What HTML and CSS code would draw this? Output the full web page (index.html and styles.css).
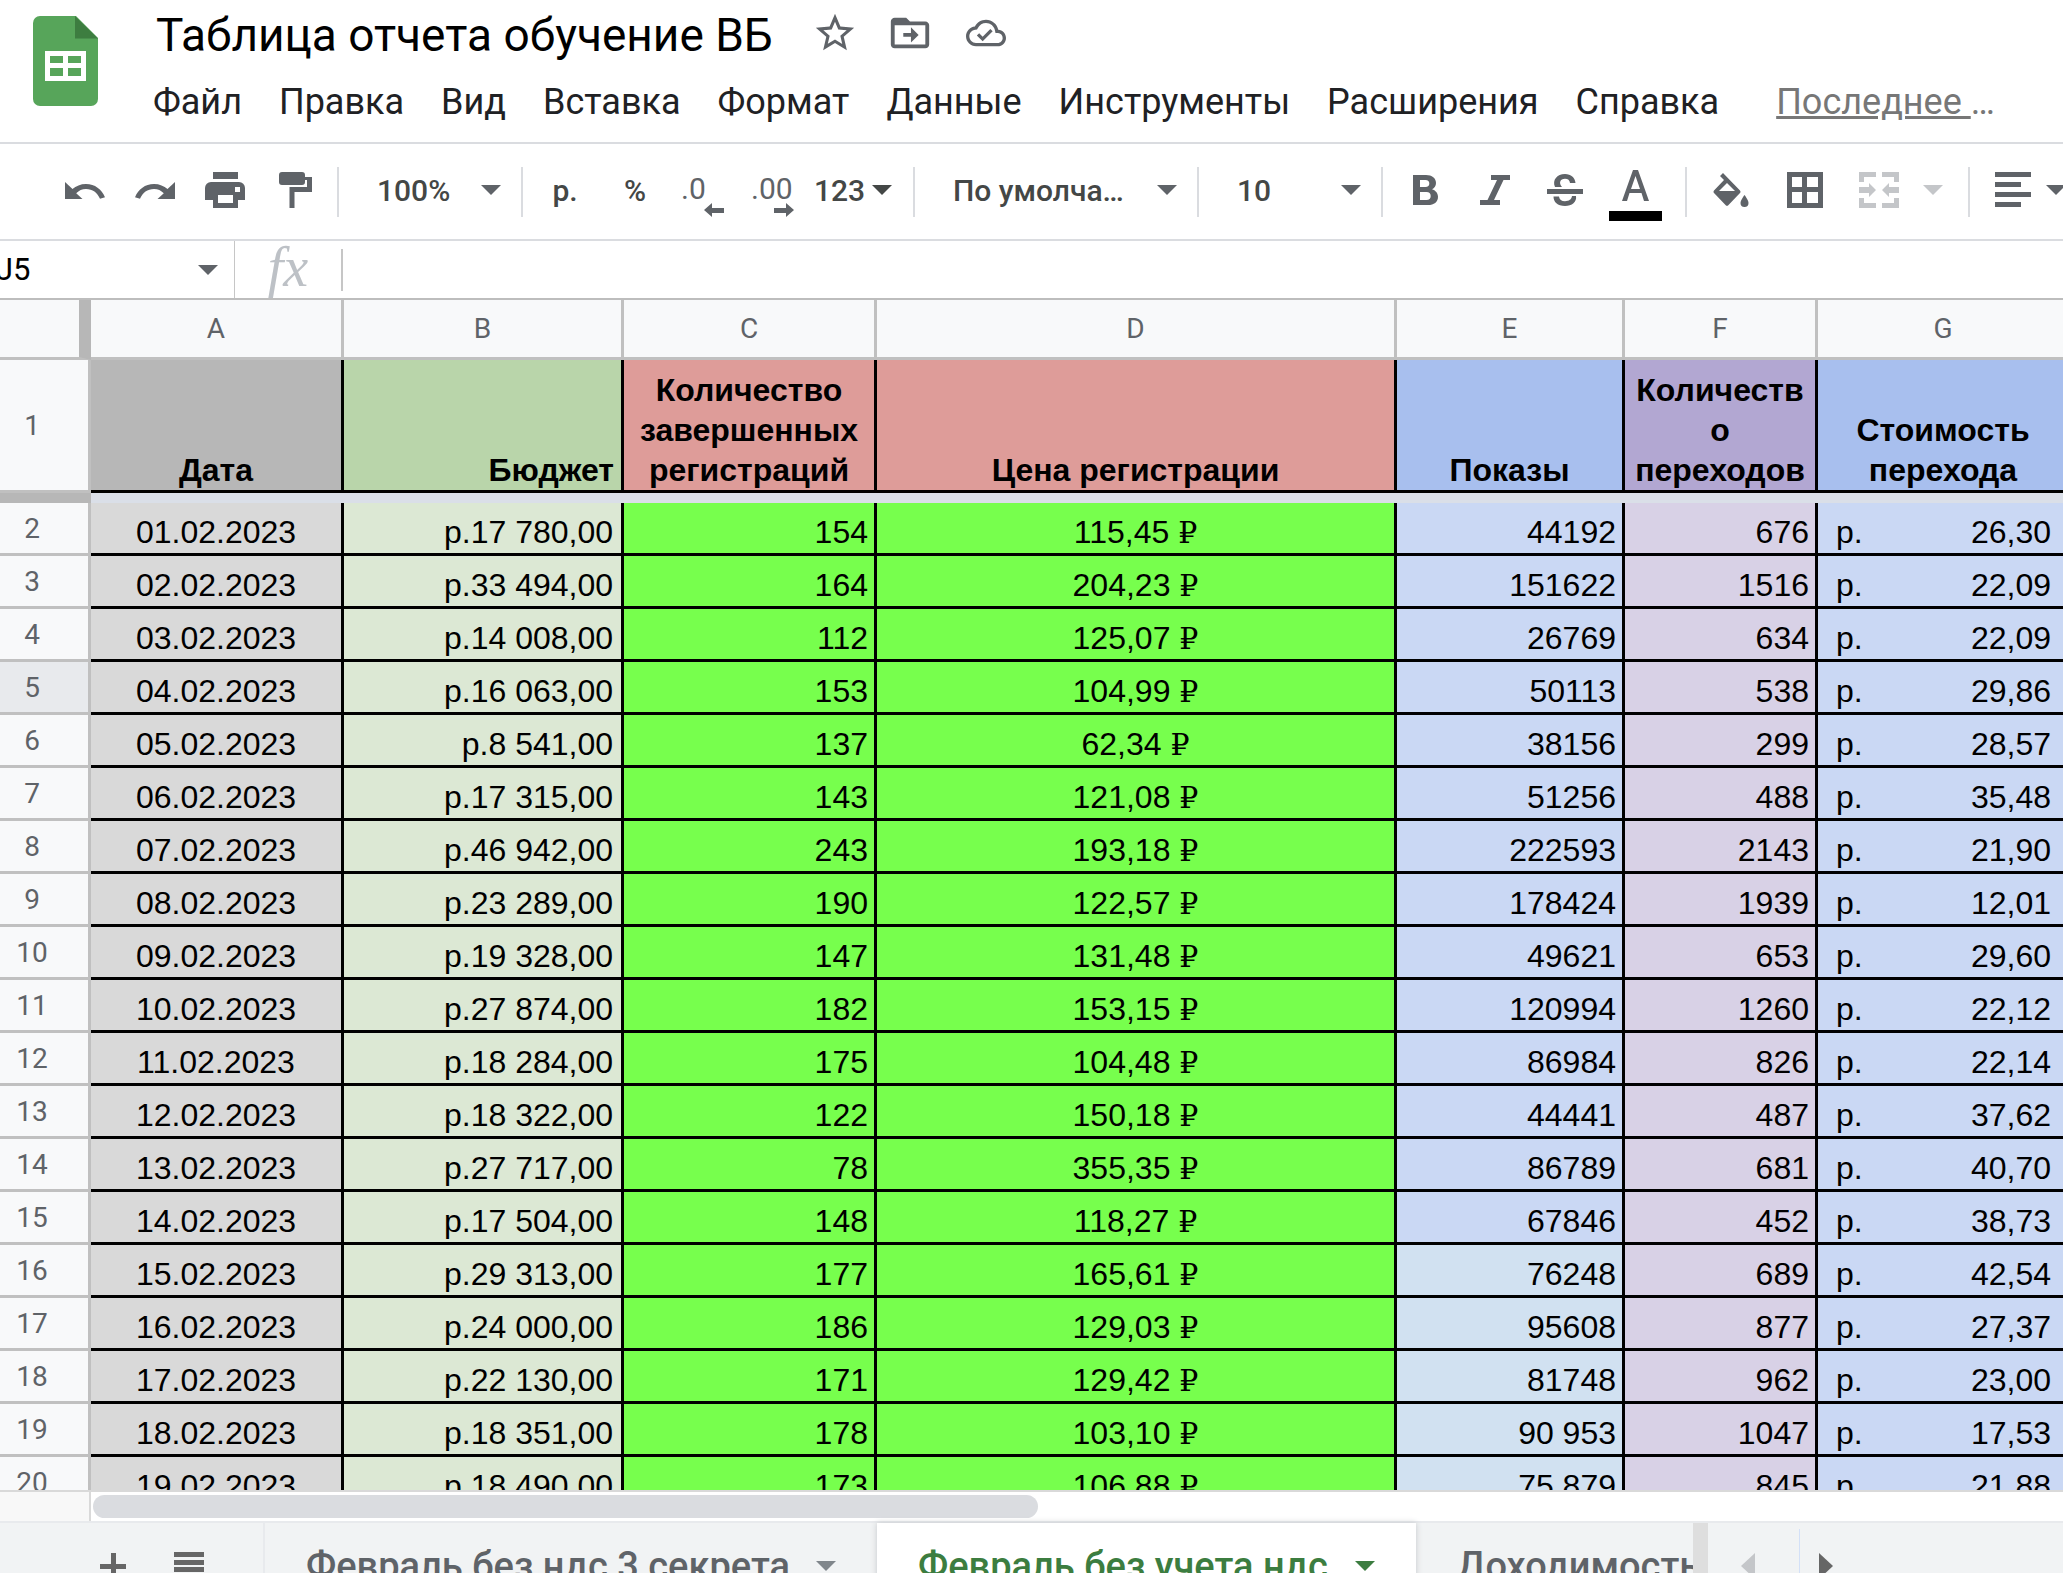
FILE: index.html
```html
<!DOCTYPE html>
<html lang="ru">
<head>
<meta charset="utf-8">
<title>Таблица отчета обучение ВБ</title>
<link rel="stylesheet" href="styles.css">
</head>
<body>
<svg class="defs" width="0" height="0" aria-hidden="true">
  <symbol id="caret" viewBox="0 0 20 10"><path d="M0 0h20L10 10z"/></symbol>
</svg>
<div class="app">
  <header class="top">
    <svg class="logo" viewBox="0 0 65 90" aria-label="Таблицы">
      <path fill="#57a55a" d="M7 0h36l22 22v61a7 7 0 0 1-7 7H7a7 7 0 0 1-7-7V7a7 7 0 0 1 7-7z"/>
      <path fill="#3d7d40" d="M42 0l23 22.500H42z"/>
      <path fill="#fff" fill-rule="evenodd" d="M12 35h41v30H12zM17 40v7h13v-7zM35 40v7h13v-7zM17 52v8h13v-8zM35 52v8h13v-8z"/>
    </svg>
    <div class="heading">
      <div class="title-row">
        <h1>Таблица отчета обучение ВБ</h1>
        <button class="title-btn" aria-label="Пометить"><svg viewBox="0 0 24 24"><path d="M22 9.240l-7.190-.62L12 2 9.190 8.630 2 9.240l5.460 4.730L5.820 21 12 17.270 18.180 21l-1.630-7.030L22 9.240zM12 15.400l-3.760 2.270 1-4.280-3.320-2.880 4.380-.38L12 6.100l1.710 4.040 4.380.38-3.320 2.880 1 4.280L12 15.400z"/></svg></button>
        <button class="title-btn" aria-label="Переместить"><svg viewBox="0 0 24 24"><path d="M20 6h-8l-2-2H4c-1.100 0-2 .9-2 2v12c0 1.100.9 2 2 2h16c1.100 0 2-.9 2-2V8c0-1.100-.9-2-2-2zm0 12H4V8h16v10zm-7.500-1l4-4-4-4v3H8.500v2h4z"/></svg></button>
        <button class="title-btn saved" aria-label="Сохранено"><svg viewBox="0 0 24 24"><path d="M19.350 10.040C18.670 6.590 15.640 4 12 4 9.110 4 6.600 5.640 5.350 8.040 2.340 8.360 0 10.910 0 14c0 3.310 2.690 6 6 6h13c2.760 0 5-2.240 5-5 0-2.640-2.050-4.780-4.650-4.960zM19 18H6c-2.210 0-4-1.790-4-4 0-2.050 1.530-3.760 3.560-3.970l1.070-.11.5-.95C8.080 7.140 9.940 6 12 6c2.620 0 4.880 1.860 5.390 4.430l.3 1.500 1.530.11c1.560.1 2.780 1.410 2.780 2.960 0 1.650-1.350 3-3 3zm-9-3.820l-2.090-2.090L6.500 13.500 10 17l6.010-6.010-1.410-1.410z"/></svg></button>
      </div>
      <nav class="menu">
        <button>Файл</button><button>Правка</button><button>Вид</button><button>Вставка</button><button>Формат</button><button>Данные</button><button>Инструменты</button><button>Расширения</button><button>Справка</button><a href="#history"><u>Последнее </u>…</a>
      </nav>
    </div>
  </header>

  <div class="toolbar">
    <div class="group">
      <button aria-label="Отменить"><svg viewBox="0 0 40 17" class="i-undo"><path d="M0 0v17h17.500l-6.300-5.700C14 8.500 17 7 21 7c6.500 0 11.500 3.700 14 9.800l5-1.600C36.500 7.300 30 2 21 2 15.500 2 11 4 7.500 7z"/></svg></button>
      <button aria-label="Повторить"><svg viewBox="0 0 40 17" class="i-undo"><path d="M40 0v17H22.500l6.300-5.700C26 8.500 23 7 19 7 12.500 7 7.500 10.700 5 16.800L0 15.200C3.500 7.300 10 2 19 2 24.500 2 29 4 32.500 7z"/></svg></button>
      <button aria-label="Печать"><svg viewBox="0 0 40 36" class="i-print"><path fill-rule="evenodd" d="M8 0h25v7H8zM6 10h28a6 6 0 0 1 6 6v12h-7v8H8v-8H0V16a6 6 0 0 1 6-6zM13 23v8h15v-8zM30 15v5h5v-5z"/></svg></button>
      <button aria-label="Копировать форматирование"><svg viewBox="0 0 33 36" class="i-paint"><path d="M3 0h20a3 3 0 0 1 3 3v2h7v15H15.500v16h-5V15H28V8h-2v2a3 3 0 0 1-3 3H3a3 3 0 0 1-3-3V3a3 3 0 0 1 3-3z"/></svg></button>
    </div>
    <label class="pick zoom"><select aria-label="Масштаб"><option>100%</option></select><svg class="caret"><use href="#caret"/></svg></label>
    <div class="group">
      <button class="txt">р.</button>
      <button class="txt">%</button>
      <button class="dec">.0<svg viewBox="0 0 20 14"><path d="M0 7l8-7v5h12v5H8v4z"/></svg></button>
      <button class="dec">.00<svg viewBox="0 0 20 14"><path d="M20 7l-8-7v5H0v5h12v4z"/></svg></button>
      <button class="num">123<svg class="caret"><use href="#caret"/></svg></button>
    </div>
    <label class="pick font"><select aria-label="Шрифт"><option>По умолча…</option></select><svg class="caret"><use href="#caret"/></svg></label>
    <label class="pick size"><select aria-label="Размер"><option>10</option></select><svg class="caret"><use href="#caret"/></svg></label>
    <div class="group styles">
      <button aria-label="Полужирный"><svg viewBox="0 0 25 30" class="i-b"><path fill-rule="evenodd" d="M0 0h13c6 0 10 3 10 8 0 3-1.500 5-4 6.200 3.500 1 6 4 6 7.500 0 5.300-4 8.300-10 8.300H0zM7 5v7h5.500c2.500 0 3.800-1.400 3.800-3.500S15 5 12.500 5zM7 17v8h6.500c2.700 0 4.200-1.500 4.200-4s-1.500-4-4.200-4z"/></svg></button>
      <button aria-label="Курсив"><svg viewBox="0 0 30 30" class="i-i"><path d="M11 0h19v5h-6.500L14 25h6v5H0v-5h7.500L17 5h-6z"/></svg></button>
      <button aria-label="Зачеркнутый"><svg viewBox="0 0 36 32" class="i-s"><path d="M0 15h36v5H0zM8 13C5 6 10 0 18 0c6 0 10 3.500 10.500 9H23c-.3-2.800-2-4.300-5-4.300-5 0-6.500 4.300-3 8.300zM25 22h4c1 6-4 10-11 10-7.500 0-11.500-4-11.500-9.500H12c.3 3 2.500 4.700 6 4.700 4 0 6.500-1.800 7-5.200z"/></svg></button>
      <button class="color" aria-label="Цвет текста"><svg viewBox="0 0 27 31" class="i-a"><path fill-rule="evenodd" d="M11 0h5l11 31h-5l-2.500-8h-12L5 31H0zM9 19h9L13.500 6z"/></svg><span></span></button>
    </div>
    <div class="group wide">
      <button aria-label="Цвет заливки"><svg viewBox="0 0 36 34" class="i-fill"><path fill-rule="evenodd" d="M10 0L27 17.500a2 2 0 0 1 0 2.500L15.500 32a2 2 0 0 1-3 0L1 20a2 2 0 0 1 0-2.500L11 7 7 3zM14 10l-8 8h16zM31.500 22s4 5 4 8a4 4 0 0 1-8 0c0-3 4-8 4-8z"/></svg></button>
      <button aria-label="Границы"><svg viewBox="0 0 36 36" class="i-grid"><path fill-rule="evenodd" d="M0 0h36v36H0zM5 5v10h10V5zM20 5v10h11V5zM5 20v11h10V20zM20 20v11h11V20z"/></svg></button>
      <button class="off" aria-label="Объединить"><svg viewBox="0 0 40 36" class="i-print"><path d="M0 0h17v5H5v5H0zM23 0h17v10h-5V5H23zM0 26h5v5h12v5H0zM35 26h5v10H23v-5h12zM0 15h10v-4l7 7-7 7v-4H0zM40 15H30v-4l-7 7 7 7v-4h10z"/></svg></button>
      <button class="off more" aria-label="Типы объединения"><svg class="caret"><use href="#caret"/></svg></button>
    </div>
    <div class="group">
      <button class="align" aria-label="Выравнивание"><svg viewBox="0 0 36 36" class="i-grid"><path d="M0 0h36v5H0zM0 10h26v5H0zM0 20h36v5H0zM0 30h26v5H0z"/></svg><svg class="caret"><use href="#caret"/></svg></button>
    </div>
  </div>

  <div class="formula">
    <div class="namebox"><input aria-label="Ячейка" value="J5"><button aria-label="Список диапазонов"><svg class="caret"><use href="#caret"/></svg></button></div>
    <label class="fx" for="fx">fx</label>
    <input id="fx" class="fx-input">
  </div>

  <main class="sheet">
    <table>
      <colgroup><col class="w-n"><col class="w-a"><col class="w-b"><col class="w-c"><col class="w-d"><col class="w-e"><col class="w-f"><col class="w-g"></colgroup>
      <thead>
        <tr class="letters"><th class="corner"></th><th>A</th><th>B</th><th>C</th><th>D</th><th>E</th><th>F</th><th>G</th></tr>
        <tr class="names"><th class="n">1</th><th class="a">Дата</th><th class="b">Бюджет</th><th class="c">Количество завершенных регистраций</th><th class="d">Цена регистрации</th><th class="e">Показы</th><th class="f">Количество переходов</th><th class="g">Стоимость перехода</th></tr>
        <tr class="freeze"><td></td><td colspan="7"></td></tr>
      </thead>
      <tbody id="rows"></tbody>
    </table>
  </main>

  <div class="scroll"><div class="scroll-corner"></div><div class="track"><div class="thumb"></div></div></div>

  <footer class="tabs">
    <div class="tab-tools">
      <button aria-label="Добавить лист"><svg viewBox="0 0 26 26" class="i-plus"><path d="M11 0h5v11h10v5H16v10h-5V16H0v-5h11z"/></svg></button>
      <button aria-label="Все листы"><svg viewBox="0 0 30 28" class="i-list"><path d="M0 0h30v5H0zM0 8h30v5H0zM0 15h30v5H0zM0 23h30v5H0z"/></svg></button>
    </div>
    <button class="tab first">Февраль без ндс 3 секрета<svg class="caret"><use href="#caret"/></svg></button>
    <button class="tab active">Февраль без учета ндс<svg class="caret"><use href="#caret"/></svg></button>
    <button class="tab last">Доходимость</button>
    <div class="tab-nav">
      <button class="off" aria-label="Назад"><svg viewBox="0 0 14 26"><path d="M14 0v26L0 13z"/></svg></button>
      <button aria-label="Вперед"><svg viewBox="0 0 14 26"><path d="M0 0v26l14-13z"/></svg></button>
    </div>
  </footer>
</div>
<script src="rows.js"></script>
</body>
</html>
```
FILE: rows.js
```js
const data = [
  ['17 780,00', '154', '115,45', '44192', '676', '26,30'],
  ['33 494,00', '164', '204,23', '151622', '1516', '22,09'],
  ['14 008,00', '112', '125,07', '26769', '634', '22,09'],
  ['16 063,00', '153', '104,99', '50113', '538', '29,86'],
  ['8 541,00', '137', '62,34', '38156', '299', '28,57'],
  ['17 315,00', '143', '121,08', '51256', '488', '35,48'],
  ['46 942,00', '243', '193,18', '222593', '2143', '21,90'],
  ['23 289,00', '190', '122,57', '178424', '1939', '12,01'],
  ['19 328,00', '147', '131,48', '49621', '653', '29,60'],
  ['27 874,00', '182', '153,15', '120994', '1260', '22,12'],
  ['18 284,00', '175', '104,48', '86984', '826', '22,14'],
  ['18 322,00', '122', '150,18', '44441', '487', '37,62'],
  ['27 717,00', '78', '355,35', '86789', '681', '40,70'],
  ['17 504,00', '148', '118,27', '67846', '452', '38,73'],
  ['29 313,00', '177', '165,61', '76248', '689', '42,54'],
  ['24 000,00', '186', '129,03', '95608', '877', '27,37'],
  ['22 130,00', '171', '129,42', '81748', '962', '23,00'],
  ['18 351,00', '178', '103,10', '90 953', '1047', '17,53'],
  ['18 490,00', '173', '106,88', '75 879', '845', '21,88']
];
document.getElementById('rows').innerHTML = data.map((r, i) => {
  const day = String(i + 1).padStart(2, '0');
  const rowClass = i === 3 ? ' current' : '';
  const views = i >= 14 ? 'e alt' : 'e';
  return `<tr><th class="n${rowClass}">${i + 2}</th><td class="a">${day}.02.2023</td><td class="b">р.${r[0]}</td><td class="c">${r[1]}</td><td class="d">${r[2]} <span class="rub">₽</span></td><td class="${views}">${r[3]}</td><td class="f">${r[4]}</td><td class="g"><div class="money"><span>р.</span><span>${r[5]}</span></div></td></tr>`;
}).join('');
```
FILE: styles.css
```css
* { box-sizing: border-box; }
body {
  margin: 0;
  overflow: hidden;
  background: #fff;
  color: #000;
  font-family: Roboto, "Noto Sans", sans-serif;
}
button, input, select {
  margin: 0;
  padding: 0;
  border: 0;
  background: none;
  color: inherit;
  font: inherit;
  appearance: none;
  outline: 0;
}
svg { display: block; fill: currentColor; flex: none; }
.defs { position: absolute; }
.caret { width: 20px; height: 10px; }
.app { display: flex; flex-direction: column; height: calc(100vh + 36px); }

.top { display: flex; flex: none; height: 144px; border-bottom: 2px solid #dadce0; }
.logo { width: 65px; height: 90px; margin: 16px 55px 0 33px; }
.title-row { display: flex; align-items: center; height: 70px; color: #5f6368; }
h1 {
  margin: 0 39px 0 3px;
  color: #000;
  font-size: 46px;
  font-weight: 400;
  line-height: 70px;
}
.title-btn { width: 75px; }
.title-btn svg { width: 46px; height: 46px; margin-bottom: 4px; }
.saved svg { width: 40px; height: 40px; margin-left: 4px; }
.menu {
  display: flex;
  gap: 37px;
  color: #202124;
  font-size: 36px;
  line-height: 64px;
  white-space: nowrap;
}
.menu a { margin-left: 20px; color: #777; text-decoration: none; }

.toolbar {
  display: flex;
  flex: none;
  align-items: center;
  height: 97px;
  padding-left: 50px;
  border-bottom: 2px solid #dadce0;
  color: #5f6368;
  font-size: 30px;
  font-weight: 500;
  overflow: hidden;
}
.toolbar > * { flex: none; height: 50px; }
.toolbar > * + * { border-left: 2px solid #dadce0; }
.group { display: flex; padding: 0 7px; }
.group:first-child { padding-left: 0; }
.group button { display: flex; align-items: center; justify-content: center; width: 70px; padding-bottom: 3px; }
.group.styles { padding-right: 15px; }
.group.wide { padding-right: 18px; }
.group.wide button { width: 74px; }
.group.wide .more { width: 34px; }
.group .txt, .num, .pick { color: #444746; }
.group .num { justify-content: flex-start; width: 96px; gap: 7px; padding-left: 4px; }
.group .dec {
  display: grid;
  grid-template-columns: 1fr;
  justify-items: start;
  align-content: start;
  padding: 0 16px 0 11px;
  font-weight: 400;
  line-height: 44px;
}
.dec svg { width: 20px; height: 14px; margin-top: -8px; justify-self: end; }
.pick { display: grid; align-items: center; padding-bottom: 3px; }
.pick > * { grid-area: 1 / 1; }
.pick .caret { justify-self: end; margin-right: 20px; color: #5f6368; pointer-events: none; }
.pick select { width: 100%; padding-left: 38px; }
.zoom { width: 184px; }
.font { width: 284px; }
.size { width: 184px; }
.i-undo { width: 40px; height: 17px; }
.i-print { width: 40px; height: 36px; }
.i-paint { width: 33px; height: 36px; }
.i-b { width: 25px; height: 30px; }
.i-i { width: 30px; height: 30px; }
.i-s { width: 36px; height: 32px; }
.i-a { width: 27px; height: 31px; }
.i-fill { width: 36px; height: 34px; }
.i-grid { width: 36px; height: 36px; }
.group .color { flex-direction: column; justify-content: flex-start; gap: 10px; padding: 3px 0 0; }
.color span { flex: none; width: 53px; height: 10px; background: #000; }
.off { color: #c4c6c9; }
.group .align { width: 90px; gap: 15px; margin-left: 8px; }

.formula { display: flex; flex: none; align-items: center; height: 59px; border-bottom: 2px solid #bdbdbd; }
.namebox { display: flex; align-items: center; width: 235px; height: 57px; padding-right: 16px; border-right: 1px solid #c6c6c6; }
.namebox input { flex: 1; min-width: 0; margin-left: -4px; font-size: 31px; }
.namebox button { color: #5f6368; }
.fx {
  width: 108px;
  height: 42px;
  border-right: 2px solid #c6c6c6;
  color: #bdc1c6;
  font: italic 56px/36px "Liberation Serif", serif;
  text-align: center;
}
.fx-input { flex: 1; min-width: 0; height: 57px; padding: 0 12px; font-size: 31px; }

.sheet { flex: 1; min-height: 0; overflow: hidden; }
table { width: 2071px; border-collapse: separate; border-spacing: 0; table-layout: fixed; }
.w-n { width: 91px; }
.w-a, .w-c, .w-g { width: 253px; }
.w-b { width: 280px; }
.w-d { width: 520px; }
.w-e { width: 228px; }
.w-f { width: 193px; }
th, td { padding: 0; overflow: hidden; }
.letters th {
  height: 60px;
  border-right: 3px solid #c0c0c0;
  border-bottom: 3px solid #c0c0c0;
  background: #f8f9fa;
  color: #5f6368;
  font-size: 28px;
  font-weight: 400;
}
.letters .corner { border-right: 12px solid #b7b7b7; }
.n {
  padding-right: 24px;
  border-right: 3px solid #c0c0c0;
  border-bottom: 3px solid #c0c0c0;
  background: #f8f9fa;
  color: #5f6368;
  font-size: 28px;
  font-weight: 400;
}
.current { background: #e8eaed; }
.a, .b, .c, .d, .e, .f, .g {
  border-right: 3px solid #000;
  border-bottom: 3px solid #000;
  font-family: "Liberation Sans", Arial, sans-serif;
  font-size: 32px;
  line-height: 40px;
}
tbody td, tbody th { height: 53px; }
tbody td { padding-top: 8px; text-align: right; white-space: nowrap; }
.names th { height: 133px; }
.names .a, .names .b, .names .c, .names .d, .names .e, .names .f, .names .g {
  padding: 0 7px;
  vertical-align: bottom;
  text-align: center;
  overflow-wrap: break-word;
}
.names .b { text-align: right; }
.names .a { background: #b7b7b7; }
.names .b { background: #b9d5aa; }
.names .c, .names .d { background: #de9c99; }
.names .e, .names .g { background: #a8bfee; }
.names .f { background: #b2a7d2; }
.freeze td { height: 10px; background: #dadfe8; }
.freeze td:first-child { background: #b7b7b7; }
tbody .a { background: #d9d9d9; text-align: center; }
tbody .b { padding-right: 8px; background: #dce8d4; }
tbody .c { padding-right: 6px; background: #77ff4d; }
tbody .d { background: #77ff4d; text-align: center; }
tbody .e { padding-right: 6px; background: #cad8f4; }
tbody .alt { background: #d1e1f1; }
tbody .f { padding-right: 6px; background: #d8d1e6; }
tbody .g { background: #cad8f4; }
.money { display: flex; justify-content: space-between; padding: 0 17px 0 18px; }
.rub { font-family: "DejaVu Serif", serif; font-size: 30px; line-height: 30px; }

.scroll { display: flex; flex: none; height: 31px; border-top: 2px solid #d9d9d9; }
.scroll-corner { width: 91px; border-right: 2px solid #d9d9d9; background: #f8f8f8; }
.track { flex: 1; padding: 3px 2px; }
.thumb { width: 48%; height: 23px; border-radius: 12px; background: #dadce0; }

.tabs {
  display: flex;
  flex: none;
  height: 88px;
  border-top: 2px solid #e8eaed;
  background: #f1f3f4;
  color: #5f6368;
  font-size: 38px;
  font-weight: 500;
  white-space: nowrap;
}
.tab-tools { display: flex; align-items: center; gap: 48px; width: 265px; padding-left: 100px; border-right: 2px solid #e8eaed; color: #666; }
.i-plus { width: 26px; height: 26px; }
.i-list { width: 30px; height: 28px; }
.tab { display: flex; flex: none; align-items: center; justify-content: space-between; padding: 0 41px; }
.tab .caret { color: #80868b; }
.first { width: 612px; }
.active { width: 539px; background: #fff; color: #3c7d40; box-shadow: 0 0 6px #c4c7ca; }
.tab.active .caret { color: #3c7d40; }
.last { width: 277px; padding: 0 0 0 41px; overflow: hidden; }
.tab-nav { display: flex; flex: 1; align-items: center; border-left: 15px solid #dedede; color: #666; }
.tab-nav button { padding-left: 33px; }
.tab-nav button + button { margin-left: 44px; padding: 24px 19px; border-left: 1px solid #d3e0f7; }
.tab-nav svg { width: 14px; height: 26px; }
```
